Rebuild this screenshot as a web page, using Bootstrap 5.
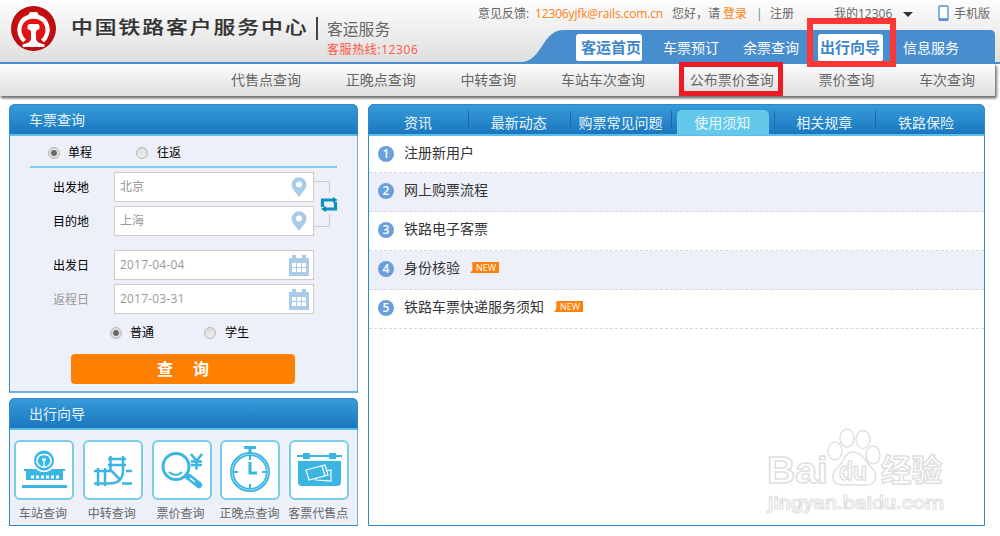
<!DOCTYPE html>
<html lang="zh-CN">
<head>
<meta charset="utf-8">
<meta name="viewport" content="width=device-width, initial-scale=1">
<title>中国铁路客户服务中心</title>
<link rel="stylesheet" href="https://cdn.jsdelivr.net/npm/bootstrap@5.3.0/dist/css/bootstrap.min.css">
<style>
body{width:1000px;height:536px;overflow:hidden;background:#fff;font-family:"Open Sans","Noto Sans CJK SC",sans-serif;font-size:12px;line-height:18px;color:#666}
a{color:inherit;text-decoration:none}
svg{display:block;flex:none}
.masthead{height:64px;background:linear-gradient(#fdfdfd,#dfdfdf);border-bottom:2px solid #4a90d0}
.brand-mark{margin:5px 0 0 10px}
.brand-name{width:236px;margin:15px 0 0 14px;color:#333;font-size:20px;line-height:24px;font-weight:500;font-family:"Noto Sans CJK SC",sans-serif;white-space:nowrap}
.brand-name span{display:inline-block;letter-spacing:1.8px;transform:scale(1.09,.9);transform-origin:0 50%;-webkit-text-stroke:.2px #333}
.brand-rule{width:2px;height:23px;background:#444;margin:17px 0 0 9px}
.service{margin:19px 0 0 9px;width:100px}
.service h2{font-size:15.8px;line-height:21px;margin:0;font-weight:400;color:#666}
.service p{font-size:12px;line-height:18px;margin:1px 0 0;color:#f54;white-space:nowrap;letter-spacing:.6px}
.head-right{width:558px;margin-left:auto}
.utility{height:30px;padding-left:36px;padding-top:5px;white-space:nowrap}
.orange{color:#ff7e10}
.mainnav{position:relative;height:32px;padding-left:134px;color:#fff;font-size:14px}
.nav-shape{position:absolute;left:80px;top:0}
.mainnav a{position:relative;line-height:27px;margin-top:4px;height:27px;white-space:nowrap}
.mainnav .tab{background:#fff;border-radius:3px 3px 2px 2px;color:#3f87cb;font-weight:700;font-size:15px}
.marker{position:absolute;z-index:3;pointer-events:none}
.marker-a{left:807px;top:18px;width:89px;height:49px;border:6px solid #ff3636}
.marker-b{left:679px;top:62px;width:104px;height:34px;border:5px solid #ed1c24}
.subnav{width:995px;height:32px;padding-left:231px;gap:44.7px;font-size:14px;line-height:31px;background:linear-gradient(#fdfdfd,#dedede);box-shadow:1px 2px 2px #777,2px 2px 3px #999;white-space:nowrap}
.main-area{padding:8px 0 0 9px;gap:10px}
.panel{border:1px solid #3387c5;border-right-color:#6eaeda;border-radius:6px 6px 0 0;background:#edf0f9}
.panel-title{height:32px;margin:-1px -1px 0;border-radius:6px 6px 0 0;background:linear-gradient(#379bd9,#1a77bf);border:1px solid #3387c5;border-bottom:2px solid #59bfe8;color:#e4f3fd;font-size:14px;line-height:29px;padding-left:19px}
.left-col{width:349px}
.search{height:289px;border-bottom:2px solid #74b1dd}
.guide{height:128px;margin-top:5px}
.trip{height:32px;margin:0 20px;border-bottom:2px solid #83cae9;padding:4px 0 0 18px;color:#000}
.knob{width:12px;height:12px;border-radius:50%;border:1px solid #b5b5b5;background:linear-gradient(#ddd,#eee);flex:none}
.knob.on{background:radial-gradient(circle,#666 0 2.4px,#ddd 3.5px)}
.fieldrow{height:34px;padding-left:43px;color:#000}
.fieldrow label{width:61px;padding-top:2px}
.field{width:200px;height:30px;border:1px solid #d0cdc8;background:#fff;padding:0 6px 0 5px;color:#999}
.swap{position:absolute;left:304px;top:13px}
.go{display:block;width:224px;height:30px;margin:4px 0 0 61px;background:#ff8000;border:0;border-radius:4px;color:#fff;font-size:16px;font-weight:700;line-height:30px;text-align:center}
.tiles{padding:10px 0 0 4px;gap:8.8px}
.tile{width:60px;text-align:center;white-space:nowrap}
.tile-box{width:60px;height:60px;border:2px solid #7acce9;border-radius:6px;background:#fff;margin-bottom:5px}
.tile span{display:block;margin:0 -4px;position:relative;left:-1px}
.news{width:617px;height:422px;background:#fff;border-right-color:#3387c5}
.news-head{height:32px;margin:-1px -1px 0;border-radius:6px 6px 0 0;background:linear-gradient(#379bd9,#1a77bf);border:1px solid #3387c5;border-bottom:2px solid #59bfe8;color:#eaf6fe;font-size:14px}
.news-head a{width:101.6px;height:18px;margin-top:6px;line-height:24px;text-align:center;white-space:nowrap;border-right:1px solid #2763ab;padding-right:1px}
.news-head a:last-child{border:0}
.news-head a.cur{width:92px;height:25px;margin:5px 5px 0 4.6px;line-height:26px;background:#63c8ea;border:0;border-radius:5px 5px 0 0}
.item{height:39px;border-bottom:1px dashed #d7d9df;padding:0 0 5px 9px;font-size:14px;color:#333}
.item:nth-child(2){height:37px;padding-bottom:3px}
.item:nth-child(odd){background:#edf0f9}
.num{width:16px;height:16px;border-radius:50%;background:#6a9fdc;color:#fff;font-size:12px;line-height:16px;text-align:center;margin:2px 10px 0 0;font-weight:600}
.fresh{width:29px;height:11px;margin-left:10px;padding-left:3px;background:#ff800a;color:#fff;font-size:9px;line-height:11px;text-align:center;clip-path:polygon(8% 0,100% 0,100% 100%,0 100%,8% 75%)}
.stamp{position:absolute;left:760px;top:420px}
</style>
</head>
<body class="position-relative">
<header class="masthead d-flex align-items-start">
  <svg class="brand-mark" width="47" height="47" viewBox="0 0 47 47"><defs><radialGradient id="red"><stop offset=".4" stop-color="#e51313"/><stop offset="1" stop-color="#b40d10"/></radialGradient></defs><circle cx="23.500" cy="23.500" r="22.500" fill="url(#red)"/><path d="M14.500 36C5.500 27.500 8.500 11.500 23.500 11.500S41.500 27.500 32.500 36" fill="none" stroke="#fff" stroke-width="4.300"/><path d="M18 10.500l2-3.500h7l2 3.500zM17.500 20.500l1.500-1.500h9l1.500 1.500v3.500q-3 .8-3.500 2.500V34q.5 4 8.500 5.500v2.500H12.500v-2.500q8-1.500 8.500-5.500v-7.500q-.5-1.700-3.500-2.500z" fill="#fff"/></svg>
  <h1 class="brand-name"><span>中国铁路客户服务中心</span></h1>
  <div class="brand-rule"></div>
  <div class="service"><h2>客运服务</h2><p>客服热线:12306</p></div>
  <div class="head-right">
    <div class="utility d-flex">
      <span style="width:57px">意见反馈:</span><a href="#" class="orange" style="width:137px;letter-spacing:-.15px">12306yjfk@rails.com.cn</a>
      <span style="width:51px">您好，请</span><a href="#" class="orange" style="width:33px">登录</a><span style="width:14px;color:#4b8f8f">|</span><a href="#" style="width:64px">注册</a>
      <a href="#" style="width:68px">我的12306</a><svg width="12" height="18" viewBox="0 0 12 18"><path d="M1 7h10L6 12z" fill="#333"/></svg>
      <svg class="ms-4" width="11" height="18" viewBox="0 0 11 18"><rect x="1" y="1" width="9" height="14" rx="1" fill="#fff" stroke="#4a90d0" stroke-width="1.300"/><path d="M1 14.500h9" stroke="#4a90d0" stroke-width="2.500"/></svg><a href="#" style="margin-left:5px">手机版</a>
    </div>
    <nav class="mainnav d-flex">
      <svg class="nav-shape" width="474" height="33" viewBox="0 0 474 33"><path d="M0 32C20 31 20 0 42 0H468Q473 0 473 5V33H0z" fill="#488ecf"/></svg>
      <a href="#" class="tab" style="width:66px;padding-left:5px">客运首页</a>
      <a href="#" style="margin-left:21px">车票预订</a>
      <a href="#" style="margin-left:24px">余票查询</a>
      <a href="#" class="tab" style="margin-left:19px;width:65px;padding-left:2px">出行向导</a>
      <a href="#" style="margin-left:20px">信息服务</a>
    </nav>
  </div>
</header>
<nav class="subnav d-flex"><a href="#">代售点查询</a><a href="#">正晚点查询</a><a href="#">中转查询</a><a href="#">车站车次查询</a><a href="#">公布票价查询</a><a href="#">票价查询</a><a href="#">车次查询</a></nav>
<div class="marker marker-a"></div><div class="marker marker-b"></div>

<main class="main-area d-flex">
  <div class="left-col">
    <section class="panel search">
      <div class="panel-title">车票查询</div>
      <div class="trip d-flex align-items-center"><i class="knob on"></i><span style="margin-left:8px;width:69px">单程</span><i class="knob" style="margin-left:-1px"></i><span style="margin-left:9px">往返</span></div>
      <div class="position-relative" style="padding-top:2px">
        <div class="fieldrow d-flex align-items-center"><label>出发地</label><div class="field d-flex align-items-center justify-content-between">北京<svg width="16" height="21" viewBox="0 0 16 21"><path d="M8 20.500C6 16 .5 12.500.5 7.800a7.500 7.500 0 0115 0C15.500 12.500 10 16 8 20.500z" fill="#a9cbe8"/><circle cx="8" cy="7.500" r="3" fill="#fff"/></svg></div></div>
        <div class="fieldrow d-flex align-items-center"><label>目的地</label><div class="field d-flex align-items-center justify-content-between">上海<svg width="16" height="21" viewBox="0 0 16 21"><path d="M8 20.500C6 16 .5 12.500.5 7.800a7.500 7.500 0 0115 0C15.500 12.500 10 16 8 20.500z" fill="#a9cbe8"/><circle cx="8" cy="7.500" r="3" fill="#fff"/></svg></div></div>
        <svg class="swap" width="25" height="48" viewBox="0 0 25 48"><path d="M0 .5h15.500v12M0 45.500h15.500V33" fill="none" stroke="#ccc"/><path d="M8.500 26v-7H20M21.500 21v7H11" fill="none" stroke="#0c93bd" stroke-width="3.200"/><path d="M19 16l4.500 3-4.500 3zM12 25L7 28l5 3z" fill="#0788b4"/></svg>
      </div>
      <div style="padding-top:10px">
        <div class="fieldrow d-flex align-items-center"><label>出发日</label><div class="field d-flex align-items-center justify-content-between" style="padding-right:4px"><span style="letter-spacing:.2px">2017-04-04</span><svg width="20" height="21" viewBox="0 0 20 21"><path d="M0 3h3V0h4v3h6V0h4v3h3v18H0z" fill="#abcce8"/><path d="M3 8h4v4H3zm5 0h4v4H8zm5 0h4v4h-4zM3 13h4v4H3zm5 0h4v4H8zm5 0h4v4h-4z" fill="#fff"/></svg></div></div>
        <div class="fieldrow d-flex align-items-center"><label style="color:#999">返程日</label><div class="field d-flex align-items-center justify-content-between" style="padding-right:4px"><span style="letter-spacing:.2px">2017-03-31</span><svg width="20" height="21" viewBox="0 0 20 21"><path d="M0 3h3V0h4v3h6V0h4v3h3v18H0z" fill="#abcce8"/><path d="M3 8h4v4H3zm5 0h4v4H8zm5 0h4v4h-4zM3 13h4v4H3zm5 0h4v4H8zm5 0h4v4h-4z" fill="#fff"/></svg></div></div>
      </div>
      <div class="d-flex align-items-center" style="height:34px;padding-left:100px;color:#000"><i class="knob on"></i><span style="margin-left:8px;width:74px">普通</span><i class="knob"></i><span style="margin-left:9px">学生</span></div>
      <button class="go p-0" type="button" style="word-spacing:16px">查 询</button>
    </section>
    <section class="panel guide">
      <div class="panel-title">出行向导</div>
      <div class="tiles d-flex">
        <a href="#" class="tile"><div class="tile-box"><svg width="56" height="56" viewBox="0 0 56 56"><g fill="#3bb5e2"><path d="M8 27h41v2h-2v9H10v-9H8zM6 43h45v3H6z"/><circle cx="28" cy="18.500" r="11.500" fill="#fff"/><circle cx="28" cy="18.500" r="10"/></g><path d="M24.500 24.500c-6-4-4-12 3.500-12s9.500 8 3.500 12" fill="none" stroke="#fff" stroke-width="1.600"/><path d="M26 17.500h4" stroke="#fff" stroke-width="2"/><path d="M28 17v8m-3 0h6" stroke="#fff" stroke-width="1.300"/><path d="M15 35h3m2 0h3m2 0h3m2 0h3m2 0h3m2 0h3" stroke="#fff" stroke-width="3"/></svg></div><span>车站查询</span></a>
        <a href="#" class="tile"><div class="tile-box"><svg width="56" height="56" viewBox="0 0 56 56" fill="none" stroke="#3bb5e2" stroke-width="2.500"><path d="M9 29h17M9 41.500h15C34 41.500 38 37 38 28V14M25.500 14v14l9 9M23 17h18M23 23h18M13 26v18M20 26v18M41 29h6M37 41.500h10"/></svg></div><span>中转查询</span></a>
        <a href="#" class="tile"><div class="tile-box"><svg width="56" height="56" viewBox="0 0 56 56" fill="none" stroke="#3bb5e2"><circle cx="22" cy="24.500" r="13" stroke-width="3"/><path d="M15 30q7 6 13 0" stroke-width="2"/><path d="M31 34l5 3" stroke-width="4"/><path d="M35 35l10 8" stroke-width="6.500" stroke-linecap="round"/><path d="M36 36l5 4" stroke="#fff" stroke-width="1.500"/><path d="M37 12l5.500 7 5.500-7M42.500 18v9.500M37 19.500h11M37 23h11" stroke-width="2.600"/></svg></div><span>票价查询</span></a>
        <a href="#" class="tile"><div class="tile-box"><svg width="56" height="56" viewBox="0 0 56 56" fill="none" stroke="#3bb5e2"><circle cx="28" cy="30" r="18" stroke-width="4"/><circle cx="28" cy="30" r="18" stroke="#b6e6f6" stroke-width=".8"/><path d="M22 5.500h12M28 6v6" stroke-width="3"/><path d="M28 20v11h7" stroke-width="3"/><path d="M28 13v5M28 42v5M11 30h5M40 30h5" stroke-width="2"/></svg></div><span>正晚点查询</span></a>
        <a href="#" class="tile"><div class="tile-box"><svg width="56" height="56" viewBox="0 0 56 56"><g fill="#3bb5e2"><path d="M6 13h45v2H6zM12 11h7v6h-7zM38 11h7v6h-7zM7 19h43v21q0 4-4 4H11q-4 0-4-4z"/></g><g fill="#3bb5e2" stroke="#fff" stroke-width="1.200"><path d="M24 31l16-3v11l-15-1z"/><path d="M15 28l19-5 3 10-19 5zM31 24l3 10"/></g></svg></div><span>客票代售点</span></a>
      </div>
    </section>
  </div>
  <section class="panel news">
    <div class="news-head d-flex"><a href="#" style="width:100px">资讯</a><a href="#">最新动态</a><a href="#">购票常见问题</a><a href="#" class="cur">使用须知</a><a href="#" style="width:102px;border-left:1px solid #2763ab">相关规章</a><a href="#">铁路保险</a></div>
    <div class="item d-flex align-items-center"><span class="num">1</span>注册新用户</div>
    <div class="item d-flex align-items-center"><span class="num">2</span>网上购票流程</div>
    <div class="item d-flex align-items-center"><span class="num">3</span>铁路电子客票</div>
    <div class="item d-flex align-items-center"><span class="num">4</span>身份核验<span class="fresh">NEW</span></div>
    <div class="item d-flex align-items-center"><span class="num">5</span>铁路车票快递服务须知<span class="fresh">NEW</span></div>
  </section>
</main>
<svg class="stamp" width="190" height="100" viewBox="0 0 190 100" fill="#fff" stroke="#e0e0e0" stroke-width="1.500" font-family="Liberation Sans,Noto Sans CJK SC,sans-serif">
  <text x="7" y="63" font-size="37" font-weight="700" textLength="61" lengthAdjust="spacingAndGlyphs">Bai</text>
  <ellipse cx="75" cy="31" rx="7" ry="9"/><ellipse cx="87" cy="18" rx="7" ry="9"/><ellipse cx="103" cy="19.500" rx="7" ry="9"/><ellipse cx="113" cy="35" rx="7" ry="9"/>
  <path d="M93 32c10 0 11 9 18 15s7 18-5 18H83c-12 0-13-11-5-18s6-15 15-15z"/>
  <text x="79" y="60" font-size="25" font-weight="700" textLength="28" lengthAdjust="spacingAndGlyphs">du</text>
  <text x="121" y="61" font-size="31" font-weight="700" textLength="61" lengthAdjust="spacingAndGlyphs">经验</text>
  <text x="8" y="89" font-size="19" stroke-width="1" font-family="Roboto,sans-serif" font-weight="500" textLength="176" lengthAdjust="spacingAndGlyphs">jingyan.baidu.com</text>
</svg>
<script src="https://cdn.jsdelivr.net/npm/bootstrap@5.3.0/dist/js/bootstrap.bundle.min.js"></script>
</body>
</html>
